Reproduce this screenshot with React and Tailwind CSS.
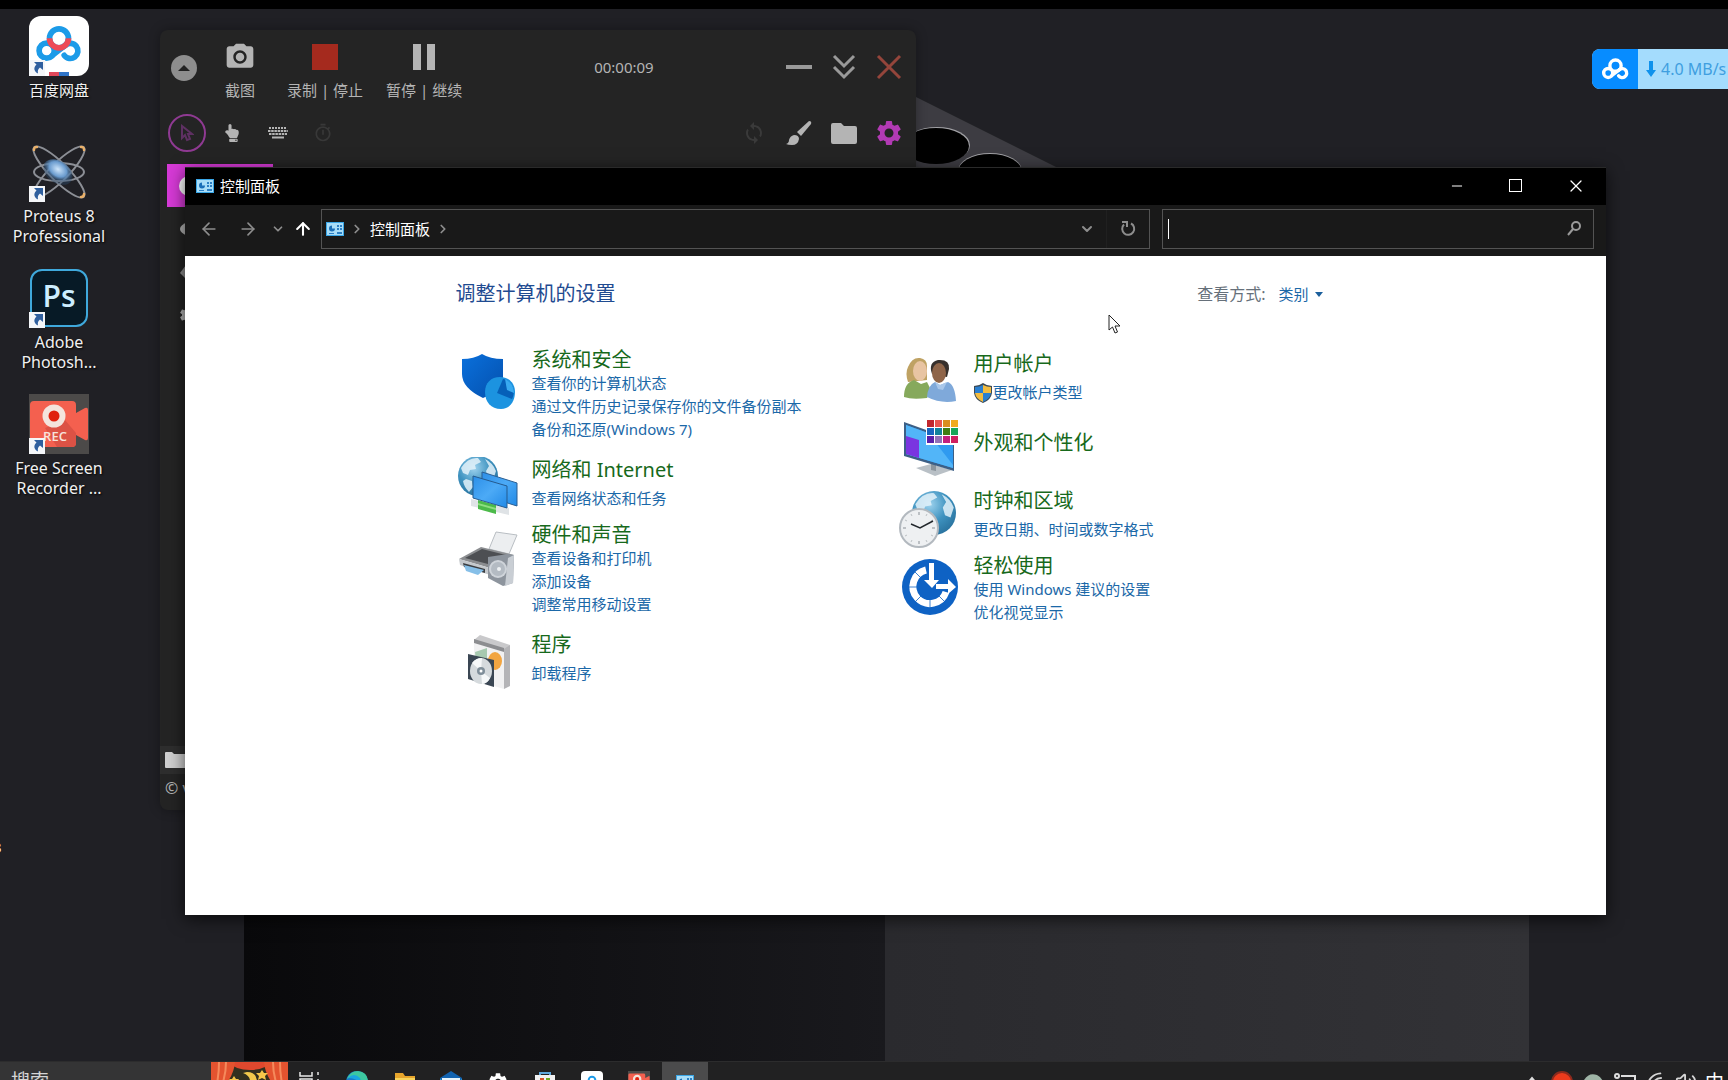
import { useState } from 'react'
import {
  ArrowLeft,
  ArrowRight,
  ArrowUp,
  ChevronDown,
  ChevronRight,
  Minus,
  X,
  ChevronUp,
  Wifi,
  Volume2,
} from 'lucide-react'
import { MdPhotoCamera, MdSettings, MdSync, MdOutlineTimer } from 'react-icons/md'
import { FaHandPointUp } from 'react-icons/fa'

/* ---------- wallpaper ---------- */

function Wallpaper() {
  return (
    <svg className="absolute inset-0 w-full h-full" viewBox="0 0 1728 1080" preserveAspectRatio="xMidYMid slice" aria-hidden="true">
      <defs>
        <linearGradient id="phoneL" x1="0" x2="1">
          <stop offset="0" stopColor="#09090b" />
          <stop offset="0.5" stopColor="#111114" />
          <stop offset="1" stopColor="#19191d" />
        </linearGradient>
        <linearGradient id="phoneR" x1="0" x2="1">
          <stop offset="0" stopColor="#2a2a2e" />
          <stop offset="1" stopColor="#323236" />
        </linearGradient>
      </defs>
      <rect width="1728" height="1080" fill="#202025" />
      <path d="M860 69 1210 244H860z" fill="#3d3c42" />
      <ellipse cx="937" cy="145" rx="33" ry="18" fill="#a0a0a4" />
      <ellipse cx="936" cy="146" rx="33" ry="18" fill="#000" />
      <ellipse cx="990" cy="171" rx="32" ry="18" fill="#a0a0a4" />
      <ellipse cx="990" cy="172" rx="32" ry="18" fill="#000" />
      <rect x="244" y="500" width="641" height="580" fill="url(#phoneL)" />
      <rect x="885" y="500" width="644" height="580" fill="url(#phoneR)" />
    </svg>
  )
}

/* ---------- desktop icons ---------- */

function BaiduMark({ className, mono }) {
  const c = mono ? '#fff' : '#1c9be8'
  return (
    <svg className={className} viewBox="0 0 48 38" fill="none" strokeWidth="6" strokeLinecap="round" aria-hidden="true">
      <circle cx="11" cy="26" r="8" stroke={c} />
      <path d="M17 31 31 20" stroke={c} />
      <path d="M31 20a8 8 0 1 1-1.500 11" stroke={c} />
      <circle cx="24" cy="13" r="10" stroke={c} />
      {!mono && <path d="M14 13a10 10 0 0 0 20 0" stroke="#ee4a57" strokeLinecap="butt" />}
    </svg>
  )
}

function BaiduIcon() {
  return (
    <div className="w-[60px] h-[60px] rounded-xl bg-white flex flex-col items-center justify-between pt-[10px] overflow-hidden">
      <BaiduMark className="w-[46px] h-9" />
      <div className="flex h-1">
        <span className="w-[10px] bg-[#e0485a]" />
        <span className="w-[10px] bg-[#2f74c8]" />
      </div>
    </div>
  )
}

function ProteusIcon() {
  return (
    <svg className="w-[60px] h-[60px]" viewBox="0 0 60 60" fill="none" aria-hidden="true">
      <defs>
        <radialGradient id="core" cx="0.45" cy="0.4">
          <stop offset="0" stopColor="#cfe6fb" />
          <stop offset="0.6" stopColor="#6a9bce" />
          <stop offset="1" stopColor="#2c4d70" stopOpacity="0.4" />
        </radialGradient>
      </defs>
      <g stroke="#8c8f96" strokeWidth="2">
        <ellipse cx="30" cy="30" rx="35" ry="9" transform="rotate(45 30 30)" />
        <ellipse cx="30" cy="30" rx="35" ry="9" transform="rotate(-45 30 30)" />
        <ellipse cx="30" cy="30" rx="25" ry="9" />
      </g>
      <ellipse cx="29" cy="30" rx="16" ry="11" transform="rotate(35 29 30)" fill="url(#core)" />
      <g stroke="#e9b06a" strokeWidth="2.500" strokeLinecap="round">
        <path d="M5 8c0-3 1-3 3-3M52 5c2 0 3 0 3 3M55 52c0 2-1 3-3 3" />
      </g>
    </svg>
  )
}

function PsIcon() {
  return (
    <div className="w-[58px] h-[58px] rounded-xl border-2 border-[#3fa9dc] bg-[#071a26] flex items-center justify-center pb-1 font-['Open_Sans',sans-serif] font-semibold text-[30px] leading-none text-[#cdeeff]">
      Ps
    </div>
  )
}

function RecIcon({ className }) {
  return (
    <svg className={className} viewBox="0 0 60 60" aria-hidden="true">
      <rect width="60" height="60" fill="#4c4a49" />
      <path d="M5 7h38q4 0 4 4v8l9-5q3-1 3 2v28q0 3-3 2l-9-5v8q0 4-4 4H5q-4 0-4-4V11q0-4 4-4z" fill="#f4604f" />
      <path d="m36 26 11 13v10q0 4-4 4H28L16 34z" fill="#dc5245" />
      <circle cx="25" cy="22" r="11.500" fill="#f4e4dd" />
      <circle cx="25" cy="22" r="5.500" fill="#e0220f" />
      <text x="26" y="47" textAnchor="middle" fontSize="13" fontWeight="600" fill="#f7e3dc" fontFamily="Open Sans, sans-serif">REC</text>
    </svg>
  )
}

function ShortcutArrow() {
  return (
    <svg className="absolute left-0 bottom-0 w-4 h-4" viewBox="0 0 16 16" aria-hidden="true">
      <rect width="16" height="16" fill="#f4f6f9" />
      <path d="M5 2h9v8l-3-2.500c-2 1.500-2.500 3-2 6-4-2-5-6-1.500-9z" fill="#2f5f9e" />
    </svg>
  )
}

const SHORTCUTS = [
  { lines: ['百度网盘'], size: 'text-[15px]', icon: <BaiduIcon /> },
  { lines: ['Proteus 8', 'Professional'], size: 'text-base', icon: <ProteusIcon /> },
  { lines: ['Adobe', 'Photosh...'], size: 'text-base', icon: <PsIcon /> },
  { lines: ['Free Screen', 'Recorder ...'], size: 'text-base', icon: <RecIcon className="w-[60px] h-[60px]" /> },
]

function Shortcuts() {
  return (
    <div className="relative w-[118px] pt-4">
      {SHORTCUTS.map(s => (
        <button key={s.lines[0]} className="w-full h-[126px] flex flex-col items-center gap-1">
          <span className="relative w-[60px] h-[60px] flex items-center justify-center">
            {s.icon}
            <ShortcutArrow />
          </span>
          <span className={`${s.size} text-[#f0f0f0] text-center [text-shadow:1px_1px_2px_#000]`}>
            {s.lines.map(l => <span key={l} className="block leading-5 whitespace-nowrap">{l}</span>)}
          </span>
        </button>
      ))}
    </div>
  )
}

/* ---------- screen recorder ---------- */

function ToolButton({ label, icon }) {
  return (
    <button className="flex flex-col items-center gap-2">
      <span className="h-[30px] flex items-center justify-center">{icon}</span>
      <span className="text-[15px] leading-5 whitespace-nowrap">{label}</span>
    </button>
  )
}

function Brush() {
  return (
    <svg className="w-[26px] h-[26px]" viewBox="0 0 26 26" fill="#b4b4b4" aria-hidden="true">
      <path d="M23 1q3 0 2 3L15 16l-4-4z" />
      <path d="M8 15q5 0 5 4-1 6-7 6-4 0-6-1 3-1 3-4 1-4 5-5z" />
    </svg>
  )
}

function Keyboard() {
  return (
    <svg className="w-5 h-3" viewBox="0 0 20 12" stroke="#b4b4b4" strokeWidth="2" aria-hidden="true">
      <path d="M1 1h18" strokeDasharray="2 1" />
      <path d="M0 4h20M1 7h18" strokeDasharray="2.500 0.700" />
      <path d="M4 10.500h12" />
    </svg>
  )
}

function Recorder() {
  return (
    <section className="absolute left-40 top-[30px] w-[756px] h-[780px] rounded-lg bg-[#242424] text-[#b4b4b4] shadow-[0_0_12px_#00000055] overflow-hidden">
      <div className="flex pl-[11px] pr-[14px] pt-3">
        <button aria-label="收起" className="mt-[13px] w-[26px] h-[26px] rounded-full bg-[#8e8e8e] flex items-center justify-center">
          <svg className="w-3 h-[6px]" viewBox="0 0 12 6"><path d="M0 6 6 0l6 6z" fill="#222" /></svg>
        </button>
        <div className="flex items-start pl-[27px]">
          <ToolButton label="截图" icon={<MdPhotoCamera className="w-8 h-8" />} />
          <div className="ml-[31px]">
            <ToolButton label="录制 | 停止" icon={<span className="w-[26px] h-[26px] bg-[#a52a1e]" />} />
          </div>
          <div className="ml-[23px]">
            <ToolButton label="暂停 | 继续" icon={<svg className="w-[22px] h-[26px]" viewBox="0 0 22 26" fill="#b4b4b4"><path d="M0 0h8v26H0zM14 0h8v26h-8z" /></svg>} />
          </div>
        </div>
        <time className="ml-[132px] mt-[15px] text-[15px] leading-5">00:00:09</time>
        <div className="ml-auto mt-3 flex items-start gap-[19px]">
          <button aria-label="最小化" className="w-[26px] h-[26px] flex items-center"><span className="w-full h-1 bg-[#999]" /></button>
          <button aria-label="折叠" className="w-[26px] h-[26px]">
            <svg className="w-[26px] h-[26px]" viewBox="0 0 26 26" fill="none" stroke="#999" strokeWidth="3"><path d="m3 2 10 10L23 2M3 13l10 10 10-10" /></svg>
          </button>
          <button aria-label="关闭" className="w-[26px] h-[26px]">
            <svg className="w-[26px] h-[26px]" viewBox="0 0 26 26" stroke="#94453b" strokeWidth="3"><path d="m2 2 22 22M24 2 2 24" /></svg>
          </button>
        </div>
      </div>

      <div className="flex items-center pl-2 pr-[14px] h-[38px] mt-[14px]">
        <button aria-label="光标" className="w-[38px] h-[38px] rounded-full border-2 border-[#8f3a92] flex items-center justify-center">
          <svg className="w-[14px] h-[18px]" viewBox="0 0 14 18" fill="none" stroke="#5e3062" strokeWidth="2"><path d="M2 2v12l3-3 2 5 3-1-2-5h4z" /></svg>
        </button>
        <button aria-label="点击" className="ml-[17px]"><FaHandPointUp className="w-[18px] h-[18px]" /></button>
        <button aria-label="键盘" className="ml-[27px]"><Keyboard /></button>
        <button aria-label="定时" className="ml-[25px]"><MdOutlineTimer className="w-5 h-5 text-[#383838]" /></button>
        <div className="ml-auto flex gap-[19px] items-center">
          <button aria-label="刷新" className="w-[26px] flex justify-center"><MdSync className="w-6 h-6 text-[#3a3a3a]" /></button>
          <button aria-label="画笔"><Brush /></button>
          <button aria-label="文件夹"><svg className="w-[26px] h-[26px]" viewBox="0 0 26 26" fill="#b4b4b4"><path d="M2 3h8l3 3h11q2 0 2 2v14q0 2-2 2H2q-2 0-2-2V5q0-2 2-2z" /></svg></button>
          <button aria-label="设置" className="w-[26px] h-[26px] flex items-center justify-center"><MdSettings className="w-[30px] h-[30px] shrink-0 text-[#b23ab4]" /></button>
        </div>
      </div>

      <nav className="mt-3 flex flex-col items-start">
        <button aria-label="常规" className="ml-[7px] w-[106px] h-[43px] pl-3 bg-[#d63ad6] flex items-center"><span className="w-5 h-5 rounded-full bg-white" /></button>
        <button aria-label="声音" className="h-[43px] pl-5 flex items-center"><svg className="w-4 h-4" viewBox="0 0 16 16" fill="#b4b4b4"><path d="M8 1v14Q0 12 0 8t8-7z" /></svg></button>
        <button aria-label="位置" className="h-[43px] pl-5 flex items-center"><svg className="w-4 h-4" viewBox="0 0 16 16" fill="#8c8c8c"><path d="m0 9 6-8v14z" /></svg></button>
        <button aria-label="选项" className="h-[43px] pl-[18px] flex items-center"><MdSettings className="w-5 h-5" /></button>
      </nav>
      <div className="absolute left-0 right-0 bottom-0">
        <div className="h-7 pl-[5px] bg-[#2e2e2e] flex items-center"><svg className="w-5 h-4" viewBox="0 0 20 16" fill="#d0d0d0"><path d="M1 0h6l2 2h11v14H1q-1 0-1-1V1q0-1 1-1z" /></svg></div>
        <div className="h-9 pl-[5px] text-base leading-7">© vav</div>
      </div>
    </section>
  )
}

/* ---------- control panel ---------- */

function PanelGlyph({ className }) {
  return (
    <svg className={className} viewBox="0 0 18 14" aria-hidden="true">
      <rect width="18" height="14" fill="#3aa7e8" />
      <rect x="1" y="1" width="16" height="12" fill="#a8ddf8" />
      <path d="M6 3.500a3 3 0 1 0 3 3H6z" fill="#1b6fb8" />
      <path d="M11 3h2v2h-2zM14 3h2v2h-2zM11 6h2v2h-2zM14 6h2v2h-2zM3 11h5v1H3zM11 10h5v2h-5z" fill="#2c7fc4" />
    </svg>
  )
}

function SecurityIcon() {
  return (
    <svg viewBox="0 0 60 60" className="w-[60px] h-[60px]" aria-hidden="true">
      <defs>
        <linearGradient id="sh" x1="0" y1="0" x2="1" y2="1"><stop offset="0" stopColor="#0a70dc" /><stop offset="1" stopColor="#0450ad" /></linearGradient>
      </defs>
      <path d="M6 6q12 0 20-5 8 5 21 5v18q0 13-20 21Q6 35 6 21z" fill="url(#sh)" />
      <path d="M44 24c10 0 15 7 15 15 0 9-5 17-14 17-10 0-16-7-16-17 0-9 6-15 15-15z" fill="#1c93e0" />
      <path d="m47 26-6 14 15 6c4-8 1-18-9-20z" fill="#0660b8" />
      <path d="m49 26 2 11 7 3c0-7-4-12-9-14z" fill="#38aaf0" />
    </svg>
  )
}

function Globe({ cx, cy, r }) {
  return (
    <g>
      <circle cx={cx} cy={cy} r={r} fill="url(#globe)" />
      <g transform={`translate(${cx} ${cy}) scale(${r / 20})`} fill="#e3f2fa" opacity="0.85">
        <path d="M-17-8Q-10-19 0-18l3 4-6 3 1 4-6 1-2 5-5-2z" />
        <path d="M7-17q8 4 11 12l-3 9-5-2-2-7 3-5zM-12 3l6 2 1 6-4 5q-5-5-6-11z" />
      </g>
    </g>
  )
}

function GlobeDefs() {
  return (
    <svg className="absolute w-0 h-0" aria-hidden="true">
      <defs>
        <radialGradient id="globe" cx="0.4" cy="0.3" r="0.8">
          <stop offset="0" stopColor="#9fd3ee" />
          <stop offset="0.5" stopColor="#3f93c0" />
          <stop offset="1" stopColor="#256c98" />
        </radialGradient>
        <linearGradient id="screen" x1="0" y1="0" x2="1" y2="1">
          <stop offset="0" stopColor="#2c8fe8" />
          <stop offset="0.5" stopColor="#4caaf6" />
          <stop offset="1" stopColor="#2189e6" />
        </linearGradient>
      </defs>
    </svg>
  )
}

function NetworkIcon() {
  return (
    <svg viewBox="0 0 62 60" className="w-[62px] h-[60px]" aria-hidden="true">
      <Globe cx={22} cy={19} r={20} />
      <path d="m26 15 35 11v23L26 38z" fill="url(#screen)" stroke="#2b5f93" />
      <path d="m15 42 38 9v7l-38-9z" fill="#dfe3e6" />
      <path d="m22 43 18 5v9l-18-5z" fill="#4cba4a" />
      <path d="m22 46 18 5v2l-18-5z" fill="#8ede80" />
      <path d="m17 19 34 10v22L17 41z" fill="url(#screen)" stroke="#255a8e" />
    </svg>
  )
}

function HardwareIcon() {
  return (
    <svg viewBox="0 0 62 60" className="w-[62px] h-[60px]" aria-hidden="true">
      <path d="m40 4 21 3-8 19-20-5z" fill="#eceef0" stroke="#b9bec3" />
      <path d="m3 31 22-12 33 8-24 13z" fill="#8b8d90" />
      <path d="m9 30 17-9 24 6-18 9z" fill="#4d4f53" />
      <path d="m3 31 31 9v7L4 37z" fill="#c4c8cc" />
      <path d="m7 35 22 6v4l-21-6z" fill="#3b3e42" />
      <path d="m8 37 20 5-6 5-12-4z" fill="#86bfe8" />
      <path d="m32 29 20-3 6 1-1 28-10 3-15-8z" fill="#8d949d" />
      <path d="m52 30 6-3-1 28-8 3z" fill="#c9ced4" />
      <circle cx="42" cy="41" r="9" fill="#cfd4da" />
      <circle cx="42" cy="41" r="7" fill="#b4bbc3" />
      <circle cx="43" cy="41" r="2" fill="#eef1f4" />
    </svg>
  )
}

function ProgramsIcon() {
  return (
    <svg viewBox="0 0 60 60" className="w-[60px] h-[60px]" aria-hidden="true">
      <path d="m18 8 6-5 30 10-2 6z" fill="#c9c9cb" />
      <path d="m18 8 30 9v40l-30-9z" fill="#f1f1f2" />
      <path d="m18 7 30 9v4l-30-9z" fill="#8c8d90" />
      <path d="m48 17 6-4v41l-6 3z" fill="#b4b4b7" />
      <path d="m19 20 12-4v14H20z" fill="#a7c9b0" />
      <ellipse cx="39" cy="29" rx="7" ry="9" fill="#f2a541" />
      <path d="m12 22 26 6v27l-26-8z" fill="#3a4653" />
      <ellipse cx="25" cy="39" rx="11" ry="13" fill="#d5dadd" />
      <path d="M25 39 16 31q4-5 10-5zM25 39l9 7q-3 6-8 6z" fill="#f6f8f9" />
      <circle cx="25" cy="39" r="4" fill="#7f8e99" />
      <circle cx="25" cy="39" r="1.500" fill="#fff" />
    </svg>
  )
}

function UsersIcon() {
  return (
    <svg viewBox="0 0 60 60" className="w-[60px] h-[60px]" aria-hidden="true">
      <path d="M10 31q-3-9 0-15Q14 6 22 7q7 1 7 8v14z" fill="#bfa263" />
      <ellipse cx="22" cy="20" rx="7" ry="10" fill="#e8c4a2" />
      <path d="M6 46q0-14 10-17l7 4 6-2 4 8-4 8q-15 2-23-1z" fill="#86a95c" />
      <path d="M34 23q-4-12 6-14 12-1 11 9l-2 8z" fill="#37302c" />
      <ellipse cx="41" cy="22" rx="7" ry="10" fill="#8f6549" />
      <path d="M29 46q1-12 8-15l5 3 8-3q7 3 8 19-15 3-29-4z" fill="#7fa9da" />
      <path d="m37 31 5 3 7-3-4 8-5-1z" fill="#a9c7ea" />
    </svg>
  )
}

const SWATCHES = [
  ['#c1272d', '#e8554e', '#d98e1f', '#f0ab1f'],
  ['#1766c0', '#11829c', '#3f7d12', '#18a558'],
  ['#5a1fa8', '#9272b8', '#c2207e', '#cf1f5f'],
]

function AppearanceIcon() {
  return (
    <svg viewBox="0 0 62 62" className="w-[62px] h-[62px]" aria-hidden="true">
      <path d="m18 52 15-4 21 6-17 6z" fill="#b9c0c6" />
      <path d="m33 47 5 1v7l-5-1z" fill="#8b949c" />
      <path d="m6 6 50 18v31L6 40z" fill="#3c5f86" />
      <path d="m8 9 47 17v26L8 38z" fill="#2f9af0" />
      <path d="m8 9 22 8 25 32v3L8 38z" fill="#52b5f8" />
      <path d="m8 20 13 4v18L8 38z" fill="#7a35e0" />
      <rect x="28" y="3" width="34" height="26" fill="#fff" />
      {SWATCHES.map((row, y) => row.map((c, x) => (
        <rect key={c} x={29 + x * 8} y={4 + y * 8} width="7" height="7" fill={c} />
      )))}
    </svg>
  )
}

function ClockIcon() {
  return (
    <svg viewBox="0 0 60 62" className="w-[60px] h-[62px]" aria-hidden="true">
      <Globe cx={36} cy={25} r={22} />
      <circle cx="21" cy="40" r="19" fill="#eef0f2" stroke="#b3b9bf" strokeWidth="2" />
      <g stroke="#8a9096">
        <path d="M21 24v3M21 53v3M5 40h3M34 40h3" />
        <path d="m13 26 1 2M29 26l-1 2M13 54l1-2M29 54l-1-2M7 32l2 1M35 32l-2 1M7 48l2-1M35 48l-2-1" strokeOpacity="0.5" />
      </g>
      <path d="m13 36 9 4 13-7" fill="none" stroke="#22272c" strokeWidth="1.500" />
    </svg>
  )
}

function EaseIcon() {
  return (
    <svg viewBox="0 0 60 60" className="w-[60px] h-[60px]" aria-hidden="true">
      <circle cx="32" cy="28" r="28" fill="#0e62c4" />
      <path d="M28 11A17 17 0 1 0 48 33" fill="none" stroke="#fff" strokeWidth="7" />
      <g stroke="#0e62c4" strokeWidth="0.800">
        <path d="M11 28h8M17 13l6 6M17 43l6-6M32 41v8M47 43l-6-6" />
      </g>
      <path d="M31 4h5v17h5l-7 8-8-8h5z" fill="#fff" />
      <path d="M38 25h12v-5l8 8-8 7v-5H38z" fill="#fff" />
    </svg>
  )
}

function Uac() {
  return (
    <svg className="w-[18px] h-5 shrink-0" viewBox="0 0 18 20" aria-hidden="true">
      <path d="M9 0q4 3 9 3v7q-1 7-9 10Q1 17 0 10V3q5 0 9-3z" fill="#3c4a55" />
      <path d="M9 2v8H1V4q4 0 8-2zM9 10h8q-1 6-8 9z" fill="#2a7fd0" />
      <path d="M9 2q4 2 8 2v6H9zM9 10v9q-7-3-8-9z" fill="#f3bc3f" />
    </svg>
  )
}

const LEFT = [
  { title: '系统和安全', icon: <SecurityIcon />, links: ['查看你的计算机状态', '通过文件历史记录保存你的文件备份副本', '备份和还原(Windows 7)'] },
  { title: '网络和 Internet', icon: <NetworkIcon />, links: ['查看网络状态和任务'] },
  { title: '硬件和声音', icon: <HardwareIcon />, links: ['查看设备和打印机', '添加设备', '调整常用移动设置'] },
  { title: '程序', icon: <ProgramsIcon />, links: ['卸载程序'] },
]

const RIGHT = [
  { title: '用户帐户', icon: <UsersIcon />, links: ['更改帐户类型'], shield: true },
  { title: '外观和个性化', icon: <AppearanceIcon />, links: [] },
  { title: '时钟和区域', icon: <ClockIcon />, links: ['更改日期、时间或数字格式'] },
  { title: '轻松使用', icon: <EaseIcon />, links: ['使用 Windows 建议的设置', '优化视觉显示'] },
]

function Category({ title, icon, links, shield }) {
  const many = links.length > 1
  return (
    <section className={`flex ${many ? 'pb-4' : links.length ? 'h-[65px]' : 'h-[72px]'}`}>
      <div className={`w-[76px] shrink-0 ${many ? 'pt-[6px]' : ''}`}>{icon}</div>
      <div className={links.length ? '' : 'pt-[14px]'}>
        <h2 className="text-xl leading-[25px] text-[#17691b] whitespace-nowrap">
          <a href="#">{title}</a>
        </h2>
        <ul className={many ? '' : 'pt-[5px]'}>
          {links.map(l => (
            <li key={l} className="text-[15px] leading-[23px] text-[#1b68a8] whitespace-nowrap">
              <a href="#" className="inline-flex items-center gap-px">{shield && <Uac />}{l}</a>
            </li>
          ))}
        </ul>
      </div>
    </section>
  )
}

function ControlPanel() {
  const [q, setQ] = useState('')

  return (
    <main className="absolute left-[185px] right-[122px] top-[167px] bottom-[146px] flex flex-col bg-white border-t border-[#2a2a2a] shadow-[0_4px_16px_#000000aa]">
      <header className="h-[37px] shrink-0 bg-black text-white flex items-center pl-[11px] pb-[2px]">
        <PanelGlyph className="w-[18px] h-[14px]" />
        <h1 className="pl-[6px] text-[15px] leading-5">控制面板</h1>
        <div className="ml-auto flex h-full">
          <button aria-label="最小化" className="w-[59px] flex items-center justify-center"><Minus size={16} strokeWidth={1.5} /></button>
          <button aria-label="最大化" className="w-[59px] flex items-center justify-center"><span className="w-[13px] h-[13px] border border-white" /></button>
          <button aria-label="关闭" className="w-[61px] flex items-center justify-center"><X size={20} strokeWidth={1.5} /></button>
        </div>
      </header>

      <div className="h-[51px] shrink-0 bg-[#191919] text-[#8d8d8d] flex items-center pl-[14px] pr-3 pb-[3px]">
        <button aria-label="后退" className="w-5"><ArrowLeft size={20} strokeWidth={2} /></button>
        <button aria-label="前进" className="w-5 ml-[19px]"><ArrowRight size={20} strokeWidth={2} /></button>
        <button aria-label="最近" className="w-[14px] ml-[13px]"><ChevronDown size={14} strokeWidth={3} /></button>
        <button aria-label="向上" className="w-5 ml-2 text-white"><ArrowUp size={20} strokeWidth={2.5} /></button>
        <div className="ml-[8px] flex-1 h-10 border border-[#535353] flex items-center pl-1">
          <PanelGlyph className="w-[18px] h-[14px]" />
          <ChevronRight className="ml-[6px]" size={14} strokeWidth={3} />
          <button className="ml-[6px] text-[15px] leading-5 text-white">控制面板</button>
          <ChevronRight className="ml-[6px]" size={14} strokeWidth={3} />
          <button aria-label="历史地址" className="ml-auto w-10 h-full flex items-center justify-center border-r border-[#202020]"><ChevronDown size={16} strokeWidth={3} /></button>
          <button aria-label="刷新" className="w-[42px] h-full flex items-center justify-center">
            <svg className="w-4 h-4" viewBox="0 0 16 16" fill="none" stroke="#8d8d8d" strokeWidth="2"><path d="M11 2.500a6 6 0 1 1-7 1" /><path d="M2 1h5v5" /></svg>
          </button>
        </div>
        <div className="ml-3 w-[432px] h-10 border border-[#535353] flex items-center pl-[5px] pr-3">
          <span className="w-px h-5 bg-white" />
          <input aria-label="搜索控制面板" value={q} onChange={(e) => setQ(e.target.value)} className="flex-1 min-w-0 bg-transparent outline-none text-[15px] text-white" />
          <svg className="w-[14px] h-4" viewBox="0 0 14 16" fill="none" stroke="#9a9a9a" strokeWidth="2"><circle cx="9" cy="5" r="4" /><path d="M6 8 1 14" /></svg>
        </div>
      </div>

      <div className="flex-1 pt-[22px]">
        <div className="mx-auto max-w-[880px]">
          <div className="h-[32px] flex items-center justify-between pr-[13px]">
            <p className="text-xl text-[#1f4b91]">调整计算机的设置</p>
            <div className="flex items-center leading-5">
              <span className="text-base leading-5 text-[#66707a]">查看方式:</span>
              <button className="ml-[13px] flex items-center gap-[6px] text-[15px] text-[#1b68a8]">
                类别
                <svg className="w-2 h-[5px]" viewBox="0 0 8 5"><path d="M0 0h8L4 5z" fill="#1b5f9c" /></svg>
              </button>
            </div>
          </div>
          <div className="mt-[37px] grid grid-cols-2 gap-x-1">
            <div>{LEFT.map(c => <Category key={c.title} {...c} />)}</div>
            <div className="pt-1">{RIGHT.map(c => <Category key={c.title} {...c} />)}</div>
          </div>
        </div>
      </div>
    </main>
  )
}

/* ---------- taskbar ---------- */

function Curtain() {
  return (
    <svg className="w-[77px] h-10 shrink-0" viewBox="0 0 77 40" aria-hidden="true">
      <rect width="77" height="40" fill="#33301f" />
      <path d="M18 0h42q-6 8-21 8T18 0z" fill="#e0482e" />
      <path d="M0 0h24q-1 12-9 22-4 8-4 18H0zM77 0H53q1 12 9 22 4 8 4 18h11z" fill="#e4532f" />
      <path d="M8 0q0 20-6 34M15 0q0 16-7 30M69 0q0 20 6 34M62 0q0 16 7 30" fill="none" stroke="#f58a5c" strokeWidth="2" />
      <path d="M36 10q10 0 10 10 0 9-8 12-5-1-8-5 7 0 9-6 1-7-7-10z" fill="#f2c94c" />
      <path d="m51 8 2 3h4l-3 3 1 4-4-2-4 2 1-4-3-3h4zM23 14l2 3h3l-2 3v3l-3-1-4 1 1-3-2-3h3z" fill="#f6c64a" />
    </svg>
  )
}

const APPS = [
  ['任务视图', <svg viewBox="0 0 22 22" className="w-[22px] h-[22px]" fill="none" stroke="#e8e8e8" strokeWidth="1.500"><path d="M1 1v4h12V1M1 21v-4h12v4M1 8h12v6H1zM19 1v3M19 8v13" /></svg>],
  ['Edge', <svg viewBox="0 0 22 22" className="w-[22px] h-[22px]"><circle cx="11" cy="11" r="11" fill="#1878c8" /><path d="M1 8Q4 0 12 0q10 1 10 11-3 5-8 2 2-6-4-7-5-1-9 2z" fill="#3cc8a0" /><path d="M2 7q6-6 12 0 1 3 0 5-4-5-12-5z" fill="#1aa6e0" /></svg>],
  ['文件资源管理器', <svg viewBox="0 0 22 20" className="w-[22px] h-5"><path d="M2 1h8l2 3h10v15H2z" fill="#e7a52c" /><path d="M2 6h20v13H2z" fill="#f8d45c" /></svg>],
  ['邮件', <svg viewBox="0 0 22 22" className="w-[22px] h-[22px]"><path d="M11 0 22 7v14H0V7z" fill="#1263b0" /><path d="M2 7h18v10H2z" fill="#e8f4fb" /><path d="m0 8 11 7 11-7v13H0z" fill="#37aee6" /></svg>],
  ['设置', <MdSettings className="w-[22px] h-[22px] text-white" />],
  ['Microsoft Store', <svg viewBox="0 0 22 22" className="w-[22px] h-[22px]"><path d="M6 5V2h10v3" fill="none" stroke="#5fa8dc" strokeWidth="2" /><path d="M1 4h20v17H1z" fill="#f1f1f1" /><path d="M6 7h4v4H6z" fill="#d8502a" /><path d="M12 7h4v4h-4z" fill="#6ea81f" /></svg>],
  ['百度网盘', <span className="w-[22px] h-[22px] rounded bg-white flex items-center justify-center"><BaiduMark className="w-4 h-[14px]" /></span>],
  ['Free Screen Recorder', <RecIcon className="w-[22px] h-[22px]" />],
]

function Taskbar() {
  return (
    <footer className="relative h-[19px] shrink-0 overflow-hidden bg-[#212122] border-t border-[#2c2c2d]">
      <div className="h-10 flex items-center text-[#d5d5d5]">
        <button className="w-[211px] h-full bg-[#343435] pl-[11px] pb-[2px] flex items-center text-[19px] leading-6">搜索</button>
        <Curtain />
        <div className="flex h-full -ml-[2px]">
          {APPS.map(([name, icon]) => (
            <button key={name} aria-label={name} className="w-[47px] h-full flex items-center justify-center">{icon}</button>
          ))}
          <button aria-label="控制面板" className="w-[46px] h-full bg-[#4b4b4c] flex items-center justify-center"><PanelGlyph className="w-[18px] h-[18px]" /></button>
        </div>
        <div className="ml-auto flex items-center pr-1 gap-2">
          <svg className="w-[14px] h-[18px]" viewBox="0 0 14 18" fill="none" stroke="#ddd" strokeWidth="2"><path d="m2 11 5-6 5 6" /></svg>
          <span className="ml-1 w-[22px] h-[22px] rounded-full border-2 border-[#8c2a1d] bg-[#ee3b1c]" />
          <svg className="w-6 h-5" viewBox="0 0 24 20" fill="#9fb5a6"><path d="M3 8Q8 0 16 3q8 4 5 12H6Q0 14 3 8z" /></svg>
          <svg className="w-6 h-5" viewBox="0 0 24 20" fill="none" stroke="#ddd" strokeWidth="2"><circle cx="4" cy="4" r="2" /><path d="M8 4h14v10H4V8" /></svg>
          <Wifi size={22} strokeWidth={2} className="-rotate-45" />
          <Volume2 size={22} strokeWidth={2} />
          <span className="text-[19px] leading-6 text-white">中</span>
        </div>
      </div>
    </footer>
  )
}

function SpeedBadge() {
  return (
    <div className="absolute right-0 top-[49px] w-[136px] h-10 rounded-l-lg overflow-hidden flex bg-[#a4dcfd]">
      <span className="w-[46px] shrink-0 bg-[#078cff] flex items-center justify-center"><BaiduMark mono className="w-[27px] h-[22px]" /></span>
      <span className="flex items-center gap-[5px] pl-2 text-base leading-5 text-[#3f9fe0] whitespace-nowrap">
        <svg className="w-[10px] h-4" viewBox="0 0 10 16" fill="#0f92ec"><path d="M3 0h4v9h3l-5 7-5-7h3z" /></svg>
        4.0 MB/s
      </span>
    </div>
  )
}

export default function App() {
  return (
    <div className="h-screen flex flex-col overflow-hidden bg-[#202025] font-['Noto_Sans','Noto_Sans_CJK_SC',sans-serif]">
      <GlobeDefs />
      <div className="relative flex-1 min-h-0 overflow-hidden">
        <div className="absolute inset-x-0 top-0 h-screen"><Wallpaper /></div>
        <div className="absolute inset-x-0 top-0 h-[9px] bg-black" />
        <Shortcuts />
        <span className="absolute -left-[7px] top-[837px] text-[15px] leading-5 text-white">3</span>
        <Recorder />
        <SpeedBadge />
        <ControlPanel />
        <svg className="absolute left-[1108px] top-[314px] w-[13px] h-5" viewBox="0 0 13 20" fill="#fff" stroke="#222" aria-hidden="true"><path d="M1 1v15l3.500-3 2.500 6 2.500-1-2.500-6H12z" /></svg>
      </div>
      <Taskbar />
    </div>
  )
}
